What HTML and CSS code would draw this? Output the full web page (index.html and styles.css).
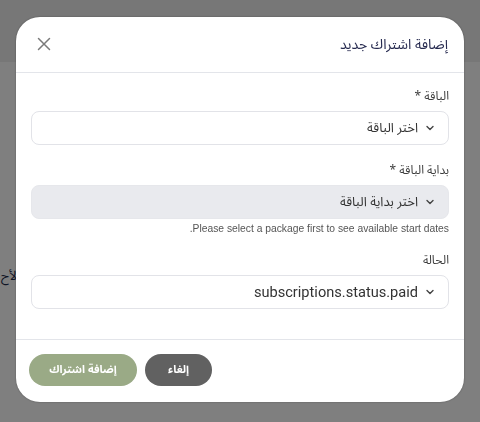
FILE: index.html
```html
<!DOCTYPE html>
<html lang="ar">
<head>
<meta charset="utf-8">
<link rel="stylesheet" href="styles.css">
</head>
<body>
<div class="page">
  <div class="page-header"></div>
  <div class="page-main">
    <p class="page-text">الأح</p>
  </div>
</div>
<div class="overlay">
  <div class="modal" dir="rtl">
    <div class="modal-header">
      <h2 class="modal-title">إضافة اشتراك جديد</h2>
      <button class="close-btn" aria-label="close">
        <svg width="14" height="14" viewBox="0 0 14 14"><path d="M1.5 1.5 L12.5 12.5 M12.5 1.5 L1.5 12.5" stroke="#7a7a7a" stroke-width="1.5" stroke-linecap="round" fill="none"/></svg>
      </button>
    </div>
    <div class="modal-body">
      <div class="field">
        <label class="label">الباقة *</label>
        <div class="select">
          <svg class="chev" width="10" height="10" viewBox="0 0 10 10"><path d="M2 3.5 L5 6.5 L8 3.5" stroke="#444" stroke-width="1.4" fill="none" stroke-linecap="round" stroke-linejoin="round"/></svg>
          <span class="select-text">اختر الباقة</span>
        </div>
      </div>
      <div class="field">
        <label class="label">بداية الباقة *</label>
        <div class="select disabled">
          <svg class="chev" width="10" height="10" viewBox="0 0 10 10"><path d="M2 3.5 L5 6.5 L8 3.5" stroke="#444" stroke-width="1.4" fill="none" stroke-linecap="round" stroke-linejoin="round"/></svg>
          <span class="select-text">اختر بداية الباقة</span>
        </div>
        <p class="help">Please select a package first to see available start dates.</p>
      </div>
      <div class="field">
        <label class="label">الحالة</label>
        <div class="select">
          <svg class="chev" width="10" height="10" viewBox="0 0 10 10"><path d="M2 3.5 L5 6.5 L8 3.5" stroke="#444" stroke-width="1.4" fill="none" stroke-linecap="round" stroke-linejoin="round"/></svg>
          <span class="select-text latin">subscriptions.status.paid</span>
        </div>
      </div>
    </div>
    <div class="modal-footer">
      <button class="btn btn-cancel">إلغاء</button>
      <button class="btn btn-submit">إضافة اشتراك</button>
    </div>
  </div>
</div>
</body>
</html>
```
FILE: styles.css
```css
* { box-sizing: border-box; }
html, body { margin: 0; padding: 0; }
body {
  width: 480px;
  height: 422px;
  overflow: hidden;
  font-family: "Noto Sans Arabic", "Noto Sans", "DejaVu Sans", sans-serif;
  background: #ffffff;
}
.page { width: 480px; height: 422px; }
.page-header { height: 62px; background: #eeeeee; }
.page-main { padding-top: 206px; }
.page-text {
  margin: 0 0 0 1px;
  font-size: 13px;
  line-height: 16px;
  color: #1e2a4a;
  direction: rtl;
  text-align: left;
  width: 40px;
}
.overlay {
  position: fixed;
  inset: 0;
  background: rgba(0, 0, 0, 0.5);
  display: flex;
  align-items: center;
  justify-content: center;
  padding-bottom: 4px;
}
.modal {
  width: 448px;
  background: #ffffff;
  border-radius: 24px;
  box-shadow: 0 0 2px rgba(0,0,0,0.35);
  overflow: hidden;
}
.modal-header {
  height: 56px;
  display: flex;
  align-items: center;
  justify-content: space-between;
  padding: 0 16px;
  border-bottom: 1px solid #e3e5ea;
}
.modal-title {
  margin: 0;
  font-size: 14px;
  font-weight: 400;
  color: #272b50;
}
.close-btn {
  background: none;
  border: 0;
  padding: 0;
  margin-left: 5px;
  width: 14px;
  height: 14px;
  display: flex;
}
.modal-body {
  padding: 14px 15px 30px;
  display: flex;
  flex-direction: column;
  gap: 16px;
}
.field { display: flex; flex-direction: column; }
.label {
  font-size: 12px;
  line-height: 20px;
  color: #3d3d3d;
  margin-bottom: 4px;
}
.select {
  height: 34px;
  border: 1px solid #e2e3e8;
  border-radius: 8px;
  background: #ffffff;
  display: flex;
  align-items: center;
  padding: 0 13px;
  gap: 7px;
}
.select.disabled { background: #e9eaee; border-color: #e6e7eb; }
.chev { flex: none; }
.select-text {
  font-size: 13px;
  color: #333333;
}
.select-text.latin {
  font-family: Roboto, "Liberation Sans", sans-serif;
  font-size: 14.6px;
}
.help {
  margin: 3px 0 0;
  font-family: "Liberation Sans", sans-serif;
  font-size: 10.3px;
  color: #555;
  line-height: 13px;
}
.modal-footer {
  border-top: 1px solid #e3e5ea;
  padding: 14px 13px 16px;
  display: flex;
  justify-content: flex-end;
  gap: 8px;
}
.btn {
  height: 32px;
  border: 0;
  border-radius: 16px;
  color: #ffffff;
  font-family: "Noto Sans Arabic", "DejaVu Sans", sans-serif;
  font-weight: 700;
  font-size: 11px;
  padding: 0;
}
.btn-cancel { background: #616161; width: 67px; }
.btn-submit { background: #9aaa86; width: 108px; }
```
